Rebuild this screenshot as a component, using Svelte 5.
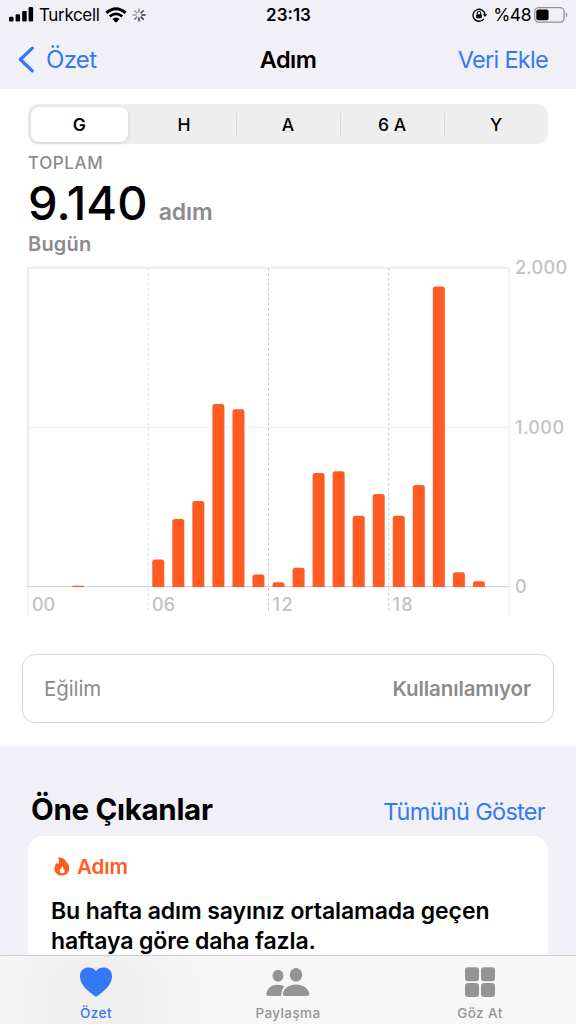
<script lang="ts">
	const ranges = ['G', 'H', 'A', '6 A', 'Y'];
	let selected = $state('G');

	// steps per hour, 00 to 23
	const steps = [
		0, 0, 8, 0, 0, 0, 172, 426, 539, 1147, 1114, 78,
		30, 120, 714, 726, 446, 583, 446, 640, 1884, 93, 36, 0
	];

	const left = 28;
	const right = 509;
	const base = 321;
	const height = 319;
	const hourWidth = (right - left) / 24;
	const barWidth = 12;

	const x = (hour: number) => left + hour * hourWidth;
	const y = (value: number) => base - (value / 2000) * height;

	function barPath(hour: number, value: number): string {
		const x0 = x(hour + 0.5) - barWidth / 2;
		const x1 = x0 + barWidth;
		const top = y(value);
		const r = Math.min(2.5, base - top);
		return `M${x0} ${base}V${top + r}Q${x0} ${top} ${x0 + r} ${top}H${x1 - r}Q${x1} ${top} ${x1} ${top + r}V${base}Z`;
	}
</script>

<div class="screen">
	<header>
		<div class="status">
			<div class="carrier">
				<svg width="25" height="15" viewBox="0 0 25 15">
					<rect x="0" y="9.8" width="4.5" height="4.7" rx="1.2" />
					<rect x="6.6" y="7.3" width="4.5" height="7.2" rx="1.2" />
					<rect x="13.2" y="4" width="4.5" height="10.5" rx="1.2" />
					<rect x="19.6" y="0" width="4.5" height="14.5" rx="1.2" />
				</svg>
				<span class="name">Turkcell</span>
				<svg class="wifi" width="22" height="16" viewBox="0 0 22 16">
					<g fill="none" stroke="#000" stroke-width="2.8">
						<path d="M1.3 5.9Q11-2.5 20.7 5.9" />
						<path d="M4.7 9.5Q11 4.3 17.3 9.5" />
					</g>
					<path d="M7.3 12Q11 8.9 14.7 12L11 15.7Z" />
				</svg>
				<svg class="spinner" width="14" height="14" viewBox="-7 -7 14 14">
					{#each [0.5, 0.8, 0.9, 0.95, 0.9, 0.6, 0.4, 0.4] as opacity, i}
						<path d="M0-3V-6.1" transform="rotate({i * 45})" stroke="#222" stroke-width="1.5" stroke-linecap="round" {opacity} />
					{/each}
				</svg>
			</div>
			<strong class="time">23:13</strong>
			<div class="power">
				<svg width="16" height="14" viewBox="0 0 16 14">
					<path d="M11.9 10.8A6 6 0 1 1 13 6.5" fill="none" stroke="#000" stroke-width="1.3" />
					<path d="M10.8 6.2H15.2L13 9Z" />
					<rect x="4.2" y="6.2" width="5.6" height="4.1" rx=".6" />
					<path d="M5.3 6.5V5.2a1.7 1.7 0 0 1 3.4 0v1.3" fill="none" stroke="#000" stroke-width="1.1" />
				</svg>
				<span class="percent">%48</span>
				<svg width="34" height="16" viewBox="0 0 34 16">
					<rect x=".7" y=".7" width="29.4" height="14.4" rx="4" fill="none" stroke="#929296" stroke-width="1.3" />
					<rect x="2.3" y="2.5" width="12.3" height="10.8" rx="2" />
					<path d="M31.8 5.2Q34.8 7.9 31.8 10.6Z" fill="#929296" />
				</svg>
			</div>
		</div>
		<nav>
			<button class="back">
				<svg width="17" height="27" viewBox="0 0 17 27">
					<path d="M14.3 2.2 2.4 13.5 14.3 24.8" fill="none" stroke="#3478f6" stroke-width="3.2" stroke-linecap="round" stroke-linejoin="round" />
				</svg>
				<span>Özet</span>
			</button>
			<h1>Adım</h1>
			<button class="add">Veri Ekle</button>
		</nav>
	</header>

	<main>
		<section class="steps">
			<div class="segments">
				{#each ranges as range}
					<button class:active={selected === range} onclick={() => (selected = range)}>{range}</button>
				{/each}
			</div>

			<div class="summary">
				<div class="label">TOPLAM</div>
				<div class="total"><span class="number">9.140</span><span class="unit">adım</span></div>
				<div class="day">Bugün</div>
			</div>

			<svg class="chart" width="576" height="354" viewBox="0 0 576 354">
				<g fill="none" stroke="#f1f1f2" stroke-width="1.5">
					<path d="M{left} 1.8H{right}" stroke="#e9e9eb" />
					<path d="M{left} {y(1000)}H{right}" />
					<path d="M{left} 1.8V{base}" stroke="#e6e6e8" />
					<path d="M{left} {base}V350" />
					<path d="M{right} 1.8V350" />
				</g>
				{#each [6, 12, 18] as hour}
					<path d="M{x(hour)} 2V347" stroke={hour === 6 ? '#dcdcde' : '#c9c9cc'} stroke-width="1" stroke-dasharray="2.6 2.4" />
				{/each}
				<path d="M{left} {base - 0.3}H{right}" stroke="#d5d5d8" stroke-width="1.2" />
				{#each steps as value, hour}
					{#if value > 0}
						<path d={barPath(hour, value)} fill="#ff5b22" />
					{/if}
				{/each}
				<g class="axis">
					<text x="515" y="8" textLength="52">2.000</text>
					<text x="515" y="167.5" textLength="49">1.000</text>
					<text x="515" y="327">0</text>
					<text x="32" y="344.5" textLength="23">00</text>
					<text x="152" y="344.5" textLength="23">06</text>
					<text x="272.5" y="344.5" textLength="20">12</text>
					<text x="392.5" y="344.5" textLength="20">18</text>
				</g>
			</svg>

			<div class="trend">
				<span>Eğilim</span>
				<strong>Kullanılamıyor</strong>
			</div>
		</section>

		<section class="highlights">
			<div class="heading">
				<h2>Öne Çıkanlar</h2>
				<button>Tümünü Göster</button>
			</div>
			<article>
				<div class="category">
					<svg width="16" height="19" viewBox="0 0 16 19">
						<path fill-rule="evenodd" d="M3.6.5C9 .2 12.6 3 12.2 6.4Q12.6 5.8 12.4 4.8C14.4 6.7 15.4 9.1 15.2 11.8C14.9 16 12 18.5 7.8 18.5C3.5 18.5.5 15.6.5 11.7C.5 9.1 1.6 7 3 5.6Q3.1 7 4 7.5C5.6 5.3 5.6 2.4 3.6.5ZM8.6 9C8.6 10.6 5.6 11.6 5.6 14Q5.6 16.3 8 16.3Q10.7 16.3 10.7 13.8Q10.7 12.7 10 11.9Q9.8 12.7 9.3 12.9Q9.8 10.6 8.6 9Z" fill="#ff5b22" />
					</svg>
					<span>Adım</span>
				</div>
				<p>Bu hafta adım sayınız ortalamada geçen<br />haftaya göre daha fazla.</p>
			</article>
		</section>
	</main>

	<footer>
		<button class="tab current">
			<svg width="34" height="32" viewBox="0 0 34 32">
				<path d="M17 30.7Q15.8 30.4 10.8 26.2C4.6 21 1 16.2 1 10.2C1 5.2 4.3 1.6 8.8 1.6C12.5 1.6 15.6 2.6 17 5.2C18.4 2.6 21.5 1.6 25.2 1.6C29.7 1.6 33 5.2 33 10.2C33 16.2 29.4 21 23.2 26.2Q18.2 30.4 17 30.7Z" />
			</svg>
			<span>Özet</span>
		</button>
		<button class="tab">
			<svg width="44" height="32" viewBox="0 0 44 32">
				<ellipse cx="12" cy="9.8" rx="5.5" ry="6" />
				<path d="M2.4 30Q.3 30 .3 28C1.2 22 5.8 18.8 12 18.8Q15.8 18.8 18.6 20.3Q15.2 23.2 15.3 30Z" />
				<ellipse cx="30" cy="8.8" rx="6.2" ry="6.9" />
				<path d="M19 30Q16.7 30 16.8 28C17.6 22.3 23 18.6 30 18.6C37 18.6 42.4 22.3 43.3 28Q43.4 30 41 30Z" />
			</svg>
			<span>Paylaşma</span>
		</button>
		<button class="tab">
			<svg width="32" height="32" viewBox="0 0 32 32">
				<rect x="1" y="1.2" width="14" height="14" rx="3.2" />
				<rect x="17" y="1.2" width="14" height="14" rx="3.2" />
				<rect x="1" y="17" width="14" height="14" rx="3.2" />
				<rect x="17" y="17" width="14" height="14" rx="3.2" />
			</svg>
			<span>Göz At</span>
		</button>
	</footer>
</div>

<style>
	:global(body) { background: #f1f0f6; }
	.screen {
		width: 576px; height: 1024px; overflow: hidden;
		display: flex; flex-direction: column;
		font-family: Inter, 'Liberation Sans', sans-serif; color: #000;
		background: #f1f0f6;
	}
	svg { display: block; flex: none; }
	button { background: none; border: 0; padding: 0; font: inherit; color: inherit; cursor: pointer; }

	header { flex: none; height: 89px; background: #f1f0f6; }
	.status {
		height: 29px; padding: 0 8px 0 9px; font-size: 17.5px;
		display: grid; grid-template-columns: 1fr auto 1fr; align-items: center;
	}
	.carrier, .power { display: flex; align-items: center; }
	.power { justify-content: flex-end; }
	.name { margin-left: 5px; font-size: 17px; letter-spacing: -0.35px; }
	.wifi { margin-left: 6px; }
	.spinner { margin-left: 5px; }
	.time { font-size: 17px; font-weight: 600; letter-spacing: 0; }
	.percent { margin: 0 3px 0 5px; letter-spacing: -0.5px; }

	nav {
		height: 60px; padding: 0 18px; font-size: 24px; color: #3478f6;
		display: grid; grid-template-columns: 1fr auto 1fr; align-items: center;
	}
	.back { display: flex; align-items: center; gap: 11px; letter-spacing: -0.7px; }
	.add { justify-self: end; margin-right: 10px; font-size: 23.5px; letter-spacing: -0.7px; }
	h1 { margin: 0; color: #000; font-size: 23.5px; font-weight: 600; letter-spacing: -0.5px; }

	main { flex: 1; min-height: 0; overflow: hidden; }
	.steps { height: 657px; background: #fff; padding-top: 15px; box-sizing: border-box; }
	.segments {
		margin: 0 28px; height: 40px;
		display: grid; grid-template-columns: repeat(5, 1fr);
		background: #eeeeef; border-radius: 10px;
	}
	.segments button { font-size: 17.5px; font-weight: 500; border-radius: 8px; }
	.segments button:nth-child(n + 3) {
		background: linear-gradient(#dadadd, #dadadd) left center / 1px 23px no-repeat;
	}
	.segments .active { margin: 2.5px 4px 2.5px 2.5px; background: #fff; font-weight: 600; box-shadow: 0 1px 4px rgba(0, 0, 0, 0.13); }

	.summary { padding-left: 28px; color: #8b8b8e; }
	.label { height: 38px; line-height: 39px; font-size: 17px; font-weight: 500; letter-spacing: 0.6px; }
	.total { height: 42px; line-height: 42px; display: flex; align-items: baseline; gap: 11px; }
	.number { color: #000; font-size: 47px; font-weight: 500; letter-spacing: 0.1px; }
	.unit { font-size: 23px; font-weight: 600; letter-spacing: -0.1px; }
	.day { height: 42px; line-height: 40px; font-size: 20px; font-weight: 600; letter-spacing: 0.2px; }
	.chart { margin-bottom: 34px; overflow: visible; }
	.axis { font-size: 18px; font-weight: 500; fill: #c2c2c5; }

	.trend {
		margin: 0 22px; height: 69px; box-sizing: border-box; padding: 0 21px;
		border: 1.5px solid #d7d7da; border-radius: 13px;
		display: flex; align-items: center; justify-content: space-between;
		font-size: 20.5px; letter-spacing: -0.1px; color: #8b8b8e;
	}
	.trend strong { font-weight: 600; margin-right: 1px; }

	.highlights { padding: 45px 28px 0; }
	.heading { height: 45px; padding: 0 3px; display: flex; align-items: baseline; justify-content: space-between; }
	h2 { margin: 0; line-height: 37px; font-size: 29.5px; font-weight: 700; letter-spacing: -0.3px; }
	.heading button { color: #3478f6; font-size: 23.5px; letter-spacing: -0.7px; }
	article { height: 180px; box-sizing: border-box; padding: 15px 23px; background: #fff; border-radius: 15px; }
	.category { height: 30px; display: flex; align-items: center; gap: 7px; padding-left: 3px; color: #ff5b22; font-size: 20.5px; font-weight: 600; letter-spacing: -0.1px; }
	p { margin: 15px 0 0; font-size: 23px; line-height: 30px; font-weight: 600; letter-spacing: -0.1px; white-space: nowrap; }

	footer {
		flex: none; height: 69px; box-sizing: border-box; border-top: 1px solid #cfcfd2;
		display: grid; grid-template-columns: repeat(3, 1fr);
		background: radial-gradient(circle at 96px 50px, #efeff0 0, #f1f1f2 60px, #f7f7f8 115px);
	}
	.tab {
		display: flex; flex-direction: column; align-items: center; padding-top: 10px; gap: 7px;
		color: #949497; fill: #949497; font-size: 13.5px; line-height: 17px; font-weight: 500; letter-spacing: 0.4px;
	}
	.current { color: #3478f6; fill: #3478f6; }
</style>
